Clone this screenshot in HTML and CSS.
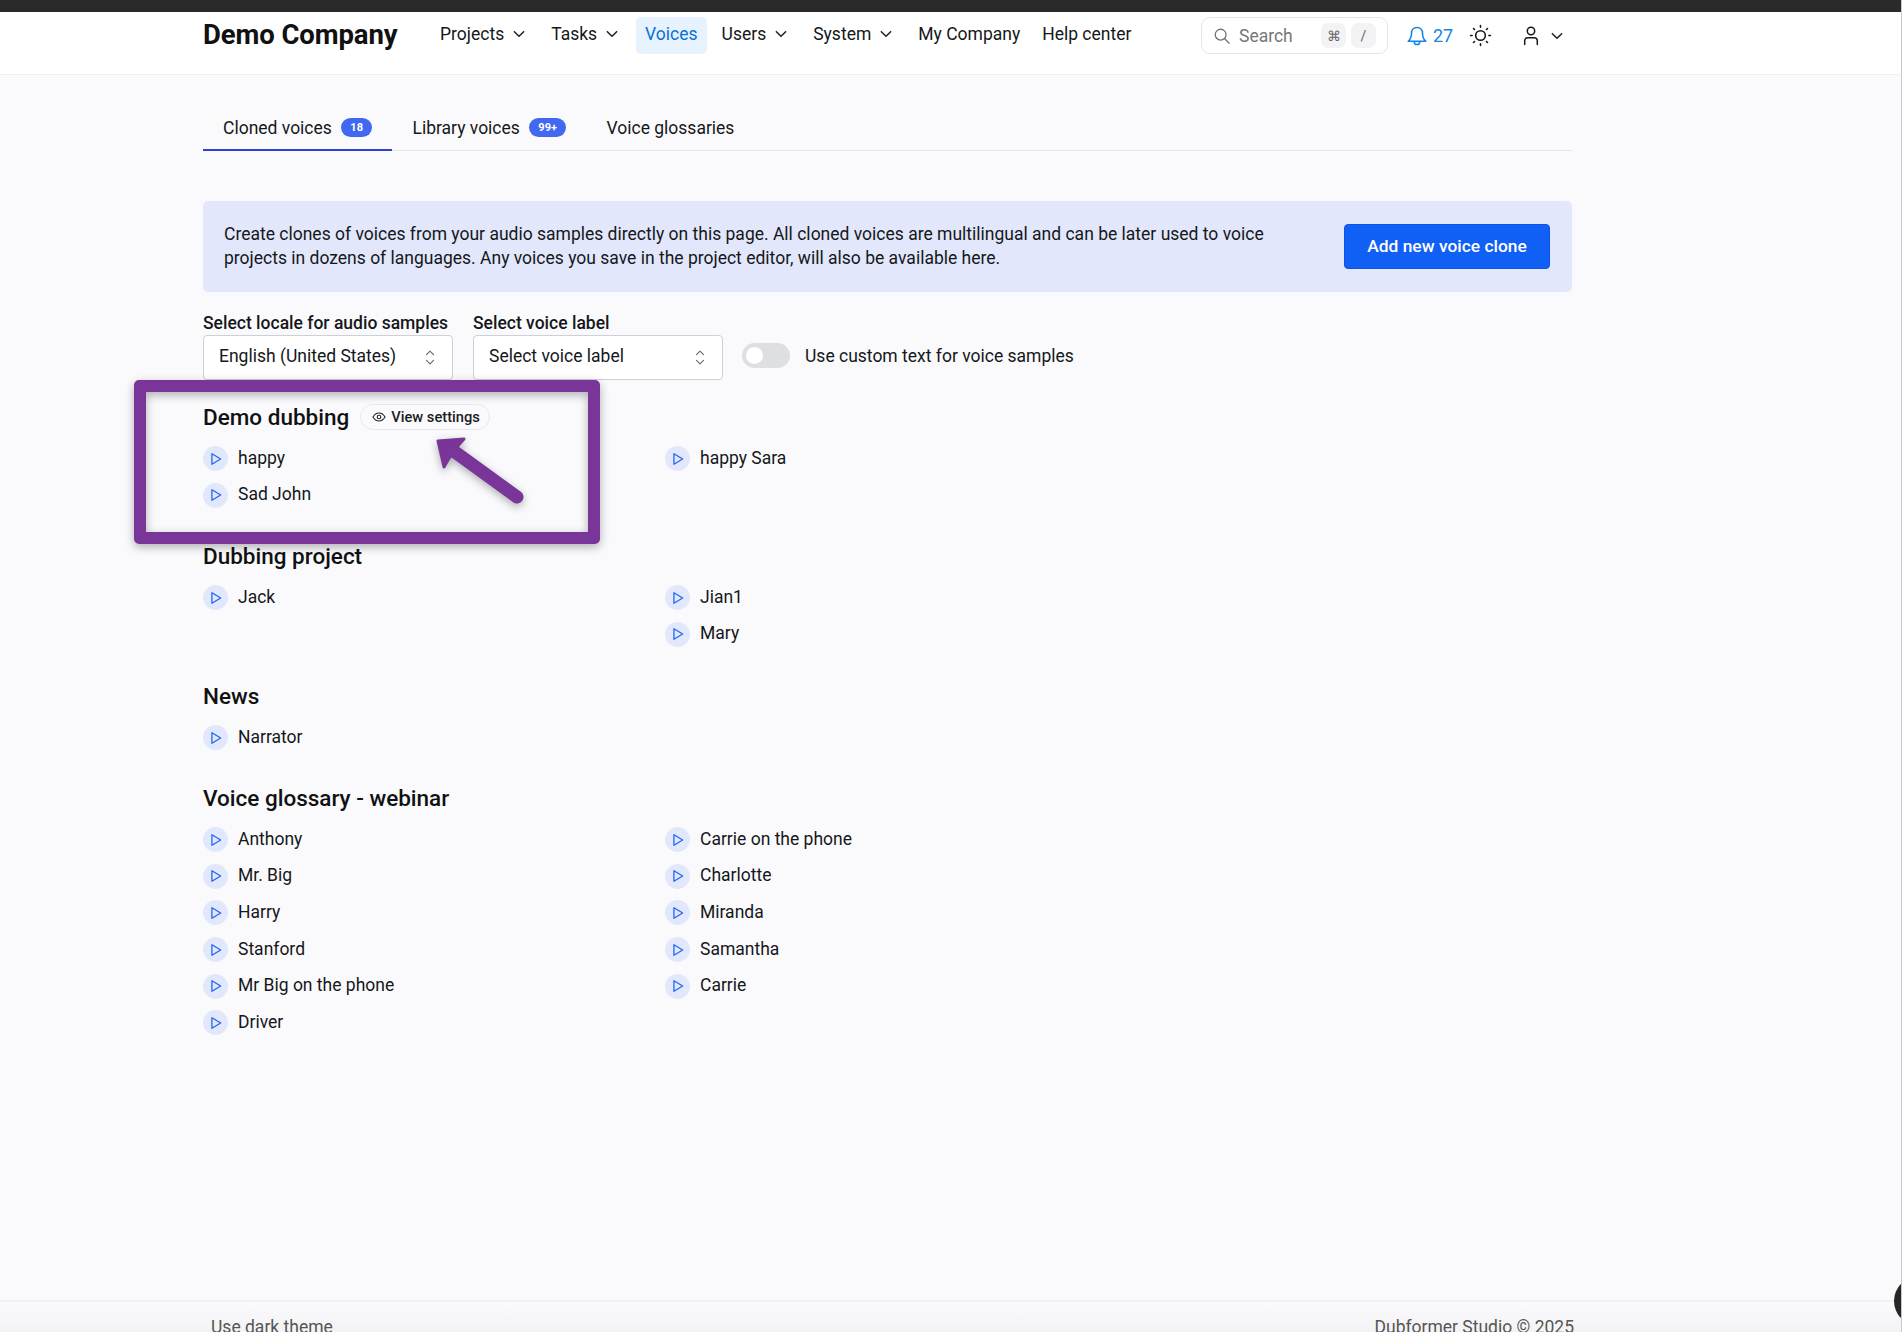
FILE: index.html
```html
<!DOCTYPE html>
<html lang="en">
<head>
<meta charset="utf-8">
<title>Voices</title>
<link rel="stylesheet" href="styles.css">
</head>
<body>
<div class="page">
  <div class="topbar"></div>
  <header class="header">
    <div class="logo">Demo Company</div>
    <nav class="nav">
      <a class="nav-item">Projects <svg class="chev" viewBox="0 0 12 12"><path d="M2 4l4 4 4-4"/></svg></a>
      <a class="nav-item">Tasks <svg class="chev" viewBox="0 0 12 12"><path d="M2 4l4 4 4-4"/></svg></a>
      <a class="nav-item active">Voices</a>
      <a class="nav-item">Users <svg class="chev" viewBox="0 0 12 12"><path d="M2 4l4 4 4-4"/></svg></a>
      <a class="nav-item">System <svg class="chev" viewBox="0 0 12 12"><path d="M2 4l4 4 4-4"/></svg></a>
      <a class="nav-item">My Company</a>
      <a class="nav-item">Help center</a>
    </nav>
    <div class="search">
      <svg class="search-icon" viewBox="0 0 20 20"><circle cx="8.5" cy="8.5" r="6"/><path d="M13 13l5 5"/></svg>
      <span class="search-text">Search</span>
      <span class="kbd">⌘</span><span class="kbd">/</span>
    </div>
    <div class="bell">
      <svg viewBox="0 0 20 20"><path d="M10 2.2c-3 0-5 2.3-5 5.2 0 4-1 5.600-3 7.400h16c-2-1.800-3-3.400-3-7.400 0-2.900-2-5.200-5-5.200z"/><path d="M7.500 15.500c.2 1.500 1.200 2.300 2.500 2.300s2.300-.8 2.500-2.300"/></svg>
      <span>27</span>
    </div>
    <svg class="sun" viewBox="0 0 22 22"><circle cx="11" cy="11" r="4.600"/><path d="M11 1.500v1.500M11 19v1.500M1.500 11H3M19 11h1.500M4.300 4.300l1 1M16.700 16.700l1 1M4.300 17.700l1-1M16.700 5.300l1-1"/></svg>
    <svg class="user" viewBox="0 0 16 20"><circle cx="8" cy="5" r="3.700"/><path d="M1.700 18.500v-3.500c0-2 1.300-3.200 3.300-3.200h6c2 0 3.300 1.200 3.300 3.200v3.500"/></svg>
    <svg class="chev user-chev" viewBox="0 0 12 12"><path d="M2 4l4 4 4-4"/></svg>
  </header>

  <main class="main">
    <div class="tabs">
      <div class="tab tab-active">Cloned voices <span class="badge">18</span></div>
      <div class="tab">Library voices <span class="badge">99+</span></div>
      <div class="tab">Voice glossaries</div>
    </div>

    <div class="banner">
      <p class="banner-text">Create clones of voices from your audio samples directly on this page. All cloned voices are multilingual and can be later used to voice projects in dozens of languages. Any voices you save in the project editor, will also be available here.</p>
      <button class="primary">Add new voice clone</button>
    </div>

    <div class="filters">
      <div class="field">
        <label class="field-label">Select locale for audio samples</label>
        <div class="select"><span class="select-text">English (United States)</span><svg viewBox="0 0 10 18"><path d="M2 6.500l3-3 3 3M2 11.500l3 3 3-3"/></svg></div>
      </div>
      <div class="field">
        <label class="field-label">Select voice label</label>
        <div class="select"><span class="select-text">Select voice label</span><svg viewBox="0 0 10 18"><path d="M2 6.500l3-3 3 3M2 11.500l3 3 3-3"/></svg></div>
      </div>
      <div class="toggle-wrap">
        <span class="toggle"><span class="knob"></span></span>
        <span>Use custom text for voice samples</span>
      </div>
    </div>

    <section class="group group-first">
      <div class="group-head">
        <h2>Demo dubbing</h2>
        <span class="chip"><svg viewBox="0 0 14 14"><path d="M1 7c1.500-2.700 3.500-4 6-4s4.500 1.300 6 4c-1.500 2.700-3.500 4-6 4s-4.500-1.300-6-4z"/><circle cx="7" cy="7" r="1.800"/></svg>View settings</span>
      </div>
      <div class="cols">
        <ul class="voices">
          <li><i class="play"><svg viewBox="0 0 12 12"><path d="M2.500 1.500v9l7.500-4.500z"/></svg></i>happy</li>
          <li><i class="play"><svg viewBox="0 0 12 12"><path d="M2.500 1.500v9l7.500-4.500z"/></svg></i>Sad John</li>
        </ul>
        <ul class="voices">
          <li><i class="play"><svg viewBox="0 0 12 12"><path d="M2.500 1.500v9l7.500-4.500z"/></svg></i>happy Sara</li>
        </ul>
      </div>
    </section>

    <section class="group">
      <div class="group-head"><h2>Dubbing project</h2></div>
      <div class="cols">
        <ul class="voices">
          <li><i class="play"><svg viewBox="0 0 12 12"><path d="M2.500 1.500v9l7.500-4.500z"/></svg></i>Jack</li>
        </ul>
        <ul class="voices">
          <li><i class="play"><svg viewBox="0 0 12 12"><path d="M2.500 1.500v9l7.500-4.500z"/></svg></i>Jian1</li>
          <li><i class="play"><svg viewBox="0 0 12 12"><path d="M2.500 1.500v9l7.500-4.500z"/></svg></i>Mary</li>
        </ul>
      </div>
    </section>

    <section class="group">
      <div class="group-head"><h2>News</h2></div>
      <div class="cols">
        <ul class="voices">
          <li><i class="play"><svg viewBox="0 0 12 12"><path d="M2.500 1.500v9l7.500-4.500z"/></svg></i>Narrator</li>
        </ul>
      </div>
    </section>

    <section class="group">
      <div class="group-head"><h2>Voice glossary - webinar</h2></div>
      <div class="cols">
        <ul class="voices">
          <li><i class="play"><svg viewBox="0 0 12 12"><path d="M2.500 1.500v9l7.500-4.500z"/></svg></i>Anthony</li>
          <li><i class="play"><svg viewBox="0 0 12 12"><path d="M2.500 1.500v9l7.500-4.500z"/></svg></i>Mr. Big</li>
          <li><i class="play"><svg viewBox="0 0 12 12"><path d="M2.500 1.500v9l7.500-4.500z"/></svg></i>Harry</li>
          <li><i class="play"><svg viewBox="0 0 12 12"><path d="M2.500 1.500v9l7.500-4.500z"/></svg></i>Stanford</li>
          <li><i class="play"><svg viewBox="0 0 12 12"><path d="M2.500 1.500v9l7.500-4.500z"/></svg></i>Mr Big on the phone</li>
          <li><i class="play"><svg viewBox="0 0 12 12"><path d="M2.500 1.500v9l7.500-4.500z"/></svg></i>Driver</li>
        </ul>
        <ul class="voices">
          <li><i class="play"><svg viewBox="0 0 12 12"><path d="M2.500 1.500v9l7.500-4.500z"/></svg></i>Carrie on the phone</li>
          <li><i class="play"><svg viewBox="0 0 12 12"><path d="M2.500 1.500v9l7.500-4.500z"/></svg></i>Charlotte</li>
          <li><i class="play"><svg viewBox="0 0 12 12"><path d="M2.500 1.500v9l7.500-4.500z"/></svg></i>Miranda</li>
          <li><i class="play"><svg viewBox="0 0 12 12"><path d="M2.500 1.500v9l7.500-4.500z"/></svg></i>Samantha</li>
          <li><i class="play"><svg viewBox="0 0 12 12"><path d="M2.500 1.500v9l7.500-4.500z"/></svg></i>Carrie</li>
        </ul>
      </div>
    </section>
  </main>

  <footer class="footer">
    <span>Use dark theme</span>
    <span>Dubformer Studio © 2025</span>
  </footer>

  <div class="callout"></div>
  <svg class="arrow" viewBox="0 0 120 90">
    <path class="arrow-shaft" d="M89 67L27 22"/>
    <path class="arrow-head" d="M10 11L36 9 28 18 20 30 16 37z"/>
  </svg>
  <div class="help-dot"></div>
</div>
</body>
</html>
```

FILE: styles.css
```css
* { box-sizing: border-box; }
html, body { margin: 0; padding: 0; height: 100%; }
body {
  font-family: Roboto, "Liberation Sans", sans-serif;
  font-size: 17.5px;
  color: #15171a;
  background: #fafafd;
}
.page {
  position: relative;
  width: 1902px;
  height: 1332px;
  overflow: hidden;
  display: flex;
  flex-direction: column;
  border-right: 1px solid #c9c9cb;
}
.topbar { height: 12px; background: #2a2a2a; flex: none; }

.header {
  flex: none;
  height: 63px;
  background: #fff;
  border-bottom: 1px solid #f1f1f4;
  display: flex;
  align-items: flex-start;
  padding: 5px 0 0 203px;
}
.logo {
  font-size: 27.5px;
  font-weight: 700;
  line-height: 35px;
  width: 237px;
  color: #111;
  letter-spacing: -0.1px;
}
.nav { display: flex; align-items: center; height: 37px; width: 761px; }
.nav-item {
  display: flex;
  align-items: center;
  height: 37px;
  border-radius: 5px;
  margin-right: 22px;
  padding-bottom: 3px;
  white-space: nowrap;
}
.nav-item .chev { margin-left: 8px; margin-right: 3px; }
.nav-item.active {
  background: #e6f3fe;
  color: #0a6fd8;
  padding: 0 9px 3px;
  margin-left: -8px;
  margin-right: 15px;
}
.chev { width: 14px; height: 14px; fill: none; stroke: #222; stroke-width: 1.300; stroke-linecap: round; stroke-linejoin: round; flex: none; }

.search {
  width: 187px;
  height: 37px;
  display: flex;
  align-items: center;
  border: 1px solid #e3e4e8;
  border-radius: 9px;
  padding: 0 11px;
  color: #777;
  background: #fff;
}
.search-icon { width: 18px; height: 18px; fill: none; stroke: #6e6e6e; stroke-width: 1.400; stroke-linecap: round; flex: none; }
.search-text { margin-left: 8px; flex: 1; }
.kbd {
  width: 25px;
  height: 25px;
  margin-left: 5px;
  border-radius: 7px;
  background: #f3f3f5;
  color: #666;
  font-size: 14px;
  display: flex;
  align-items: center;
  justify-content: center;
  flex: none;
}
.bell {
  display: flex;
  align-items: center;
  height: 37px;
  margin-left: 18px;
  color: #1384e8;
  font-size: 18px;
  gap: 5px;
  width: 63px;
}
.bell svg { width: 22px; height: 22px; fill: none; stroke: #1384e8; stroke-width: 1.400; stroke-linejoin: round; stroke-linecap: round; flex: none; }
.sun { width: 23px; height: 23px; margin-top: 7px; fill: none; stroke: #15171a; stroke-width: 1.500; stroke-linecap: round; flex: none; }
.user { width: 16px; height: 20px; margin: 9px 0 0 31px; fill: none; stroke: #15171a; stroke-width: 1.500; stroke-linecap: round; flex: none; }
.user-chev { margin: 12px 0 0 11px; }

.main { flex: 1; min-height: 0; padding: 0 329px 0 203px; }

.tabs {
  display: flex;
  height: 76px;
  padding-top: 37px;
  border-bottom: 1px solid #e5e5e9;
}
.tab {
  display: flex;
  align-items: flex-start;
  height: 39px;
  padding: 6px 20px 0;
  white-space: nowrap;
  gap: 9px;
  line-height: 20px;
}
.tab-active { border-bottom: 2px solid #2f3fd6; height: 39px; }
.badge {
  background: #4168f0;
  color: #fff;
  font-size: 11px;
  font-weight: 700;
  height: 19px;
  line-height: 19px;
  padding: 0 9.500px;
  border-radius: 10px;
}

.banner {
  margin-top: 50px;
  height: 91px;
  background: #e2e7fb;
  border-radius: 5px;
  display: flex;
  align-items: center;
  justify-content: space-between;
  padding: 0 22px 0 21px;
}
.banner-text { margin: 0 0 1px; width: 1060px; line-height: 24.300px; }
.primary {
  width: 206px;
  height: 45px;
  padding: 0 0 2px;
  background: #1160f6;
  border: 1px solid #0f54e0;
  border-radius: 4px;
  color: #fff;
  font: 500 17.400px Roboto, "Liberation Sans", sans-serif;
}

.filters { display: flex; align-items: flex-end; gap: 20px; margin-top: 20px; }
.field-label { display: block; font-weight: 500; line-height: 22px; margin-bottom: 1px; }
.select {
  width: 250px;
  height: 45px;
  background: #fff;
  border: 1px solid #ccd0d8;
  border-radius: 4px;
  display: flex;
  align-items: center;
  justify-content: space-between;
  padding: 0 16px 0 15px;
}
.select-text { padding-bottom: 3px; }
.select svg { width: 12px; height: 21px; fill: none; stroke: #666d78; stroke-width: 1; stroke-linecap: round; stroke-linejoin: round; }
.toggle-wrap { display: flex; align-items: center; gap: 15px; height: 45px; padding-bottom: 4px; margin-left: -1px; }
.toggle { width: 48px; height: 25px; background: #dddfe3; border-radius: 13px; padding: 4px; display: block; flex: none; }
.knob { display: block; width: 17px; height: 17px; border-radius: 50%; background: #fff; }

.group { height: 140px; }
.group-first { margin-top: 24px; height: 139px; }
.group:nth-of-type(3) { height: 102px; }
.group-head { display: flex; align-items: center; height: 26px; gap: 11px; }
h2 { margin: 0; font-size: 22.500px; font-weight: 500; line-height: 26px; color: #111; }
.chip {
  display: flex;
  align-items: center;
  height: 26px;
  padding: 0 9px 0 11px;
  gap: 5px;
  border: 1px solid #e8e8ec;
  border-radius: 13px;
  font-size: 14.700px;
  font-weight: 500;
  color: #1b1d20;
}
.chip svg { width: 14px; height: 14px; fill: none; stroke: #222; stroke-width: 1.100; }
.cols { display: grid; grid-template-columns: 462px 462px; margin-top: 9.500px; }
.voices { list-style: none; margin: 0; padding: 0; }
.voices li { display: flex; align-items: center; height: 36.600px; gap: 10px; }
.play {
  width: 25px;
  height: 25px;
  background: #e2e8fb;
  border-radius: 50%;
  display: flex;
  align-items: center;
  justify-content: center;
  flex: none;
  margin-top: 2px;
}
.play svg { width: 14px; height: 14px; fill: none; stroke: #2463f5; stroke-width: 1.100; stroke-linejoin: round; }

.footer {
  flex: none;
  height: 32px;
  border-top: 2px solid #f1f1f4;
  background: linear-gradient(#fafafc, #f3f3f5);
  padding: 15px 327px 0 211px;
  display: flex;
  justify-content: space-between;
  color: #555;
  font-size: 17.500px;
  line-height: 20px;
  font-weight: 400;
}

.callout {
  position: absolute;
  left: 134px;
  top: 380px;
  width: 466px;
  height: 164px;
  border: 12px solid #7a3599;
  border-radius: 5px;
  box-shadow: 0 3px 10px rgba(0,0,0,.3), inset 0 3px 10px rgba(0,0,0,.3);
}
.arrow {
  position: absolute;
  left: 428px;
  top: 430px;
  width: 120px;
  height: 90px;
  overflow: visible;
  filter: drop-shadow(0 3px 4px rgba(0,0,0,.3));
}
.arrow-shaft { stroke: #7a3599; stroke-width: 13; stroke-linecap: round; fill: none; }
.arrow-head { fill: #7a3599; stroke: #7a3599; stroke-width: 3; stroke-linejoin: round; }
.help-dot {
  position: absolute;
  left: 1894px;
  top: 1276px;
  width: 50px;
  height: 50px;
  border-radius: 50%;
  background: #262626;
}
```
